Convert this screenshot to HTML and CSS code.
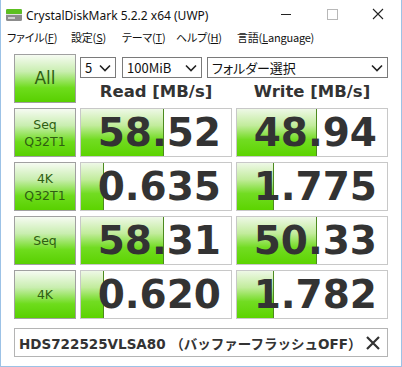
FILE: index.html
```html
<!DOCTYPE html>
<html lang="ja">
<head>
    <meta charset="UTF-8">
    <title>CrystalDiskMark 5.2.2 x64 (UWP)</title>
    <link rel="stylesheet" href="styles.css">
</head>
<body>
  <div class="window">
    <div class="titlebar">
      <svg class="app-icon" width="18" height="16" viewBox="0 0 18 16">
        <rect x="1" y="2" width="16" height="12" rx="1.5" fill="#8c8c8c"/>
        <rect x="1" y="2" width="16" height="5" rx="1.5" fill="#5cc020"/>
        <rect x="1" y="7" width="16" height="1" fill="#e0e0e0"/>
        <rect x="3" y="10" width="7" height="2" fill="#d0d0d0"/>
      </svg>
      <span class="title">CrystalDiskMark 5.2.2 x64 (UWP)</span>
      <div class="win-btns">
        <svg width="46" height="30" viewBox="0 0 46 30"><line x1="18" y1="14.5" x2="28" y2="14.5" stroke="#222" stroke-width="1"/></svg>
        <svg width="46" height="30" viewBox="0 0 46 30"><rect x="18.5" y="9.5" width="10" height="10" fill="none" stroke="#b8b8b8" stroke-width="1"/></svg>
        <svg width="46" height="30" viewBox="0 0 46 30"><path d="M18 9 L28 19 M28 9 L18 19" stroke="#222" stroke-width="1.1"/></svg>
      </div>
    </div>
    <div class="menubar">
      <span class="m-file">ファイル(<u>F</u>)</span>
      <span class="m-set">設定(<u>S</u>)</span>
      <span class="m-theme">テーマ(<u>T</u>)</span>
      <span class="m-help">ヘルプ(<u>H</u>)</span>
      <span class="m-lang">言語(<u>L</u>anguage)</span>
    </div>

    <div class="board">
      <div class="label all">All</div>
      <div class="top">
        <div class="selects">
          <div class="sel sel-count">5<svg viewBox="0 0 12 8"><path d="M1 1.5 L6 6.5 L11 1.5" fill="none" stroke="#222" stroke-width="1.6"/></svg></div>
          <div class="sel sel-size">100MiB<svg viewBox="0 0 12 8"><path d="M1 1.5 L6 6.5 L11 1.5" fill="none" stroke="#222" stroke-width="1.6"/></svg></div>
          <div class="sel sel-drive">フォルダー選択<svg viewBox="0 0 12 8"><path d="M1 1.5 L6 6.5 L11 1.5" fill="none" stroke="#222" stroke-width="1.6"/></svg></div>
        </div>
        <div class="heads">
          <div class="head">Read [MB/s]</div>
          <div class="head">Write [MB/s]</div>
        </div>
      </div>

      <div class="label">Seq<br>Q32T1</div>
      <div class="cell"><div class="bar" style="width:55%"></div><span>58.52</span></div>
      <div class="cell"><div class="bar" style="width:53.5%"></div><span>48.94</span></div>

      <div class="label">4K<br>Q32T1</div>
      <div class="cell"><div class="bar" style="width:15.5%"></div><span>0.635</span></div>
      <div class="cell"><div class="bar" style="width:24.5%"></div><span>1.775</span></div>

      <div class="label">Seq</div>
      <div class="cell"><div class="bar" style="width:55%"></div><span>58.31</span></div>
      <div class="cell"><div class="bar" style="width:53.5%"></div><span>50.33</span></div>

      <div class="label">4K</div>
      <div class="cell"><div class="bar" style="width:15.5%"></div><span>0.620</span></div>
      <div class="cell"><div class="bar" style="width:24.5%"></div><span>1.782</span></div>
    </div>

    <div class="comment">
      <span>HDS722525VLSA80 （バッファーフラッシュOFF）</span>
      <svg width="16" height="16" viewBox="0 0 16 16"><path d="M2 2 L14 14 M14 2 L2 14" stroke="#333" stroke-width="2.2"/></svg>
    </div>
  </div>
</body>
</html>
```
FILE: styles.css
```css
*{
    margin: 0;
    padding: 0;
    box-sizing: border-box;
}
body{
    background-color: #fff;
    font-family: "Noto Sans", "Noto Sans CJK JP", sans-serif;
}
.window{
    width: 402px;
    height: 367px;
    border: 1px solid #9cc2e6;
    border-top: none;
    background-color: #fff;
}
.titlebar{
    height: 30px;
    display: flex;
    align-items: center;
}
.app-icon{
    margin-left: 4px;
    margin-right: 3px;
}
.title{
    font-size: 12px;
    color: #111;
    font-family: "Noto Sans", sans-serif;
}
.win-btns{
    margin-left: auto;
    display: flex;
}
.menubar{
    height: 18px;
    display: flex;
    padding-left: 6px;
    font-size: 11px;
    letter-spacing: -0.2px;
    color: #111;
    font-family: "Noto Sans CJK JP", sans-serif;
    font-feature-settings: "palt";
    line-height: 14px;
    white-space: nowrap;
}
.menubar span{
    display: block;
}
.m-file{ width: 64px; }
.m-set{ width: 51px; }
.m-theme{ width: 54px; }
.m-help{ width: 61px; }
.menubar u{
    text-underline-offset: 1px;
}
.board{
    display: grid;
    grid-template-columns: 62px 152px 152px;
    grid-template-rows: repeat(5, 49px);
    column-gap: 4px;
    row-gap: 5px;
    padding: 6px 0 0 13px;
}
.label{
    border: 1px solid #a0a0a0;
    background: linear-gradient(#f6fbf2 0%, #c9eeb0 35%, #6edc1c 70%, #58d000 100%);
    color: #2f5e12;
    font-size: 12.5px;
    line-height: 17px;
    display: flex;
    align-items: center;
    justify-content: center;
    text-align: center;
    font-family: "DejaVu Sans", sans-serif;
}
.label.all{
    font-size: 17px;
}
.top{
    grid-column: 2 / 4;
    display: flex;
    flex-direction: column;
}
.selects{
    display: flex;
    margin-top: 3px;
    height: 21px;
}
.sel{
    border: 1px solid #7a7a7a;
    background-color: #fff;
    font-size: 13px;
    color: #111;
    display: flex;
    align-items: center;
    justify-content: space-between;
    padding: 0 4px 0 4px;
    font-family: "Noto Sans CJK JP", sans-serif;
    font-feature-settings: "palt";
}
.sel svg{
    width: 12px;
    height: 8px;
}
.sel-count{
    width: 36px;
}
.sel-size{
    width: 80px;
    margin-left: 6px;
}
.sel-drive{
    width: 181px;
    margin-left: 5px;
}
.heads{
    flex: 1;
    display: flex;
    column-gap: 4px;
    align-items: center;
}
.head{
    width: 152px;
    text-align: center;
    font-family: "DejaVu Sans", sans-serif;
    font-weight: bold;
    font-size: 16.5px;
    color: #333;
    padding-top: 2px;
}
.cell{
    position: relative;
    border: 1px solid #c8c8c8;
    background-color: #fff;
    display: flex;
    align-items: center;
    justify-content: flex-end;
    padding-right: 10px;
    overflow: hidden;
}
.bar{
    position: absolute;
    left: 0;
    top: 0;
    bottom: 0;
    background: linear-gradient(#eef8e6 0%, #c2ec9c 35%, #72dc22 65%, #5cd400 100%);
    border-right: 1px solid #4c8a1e;
}
.cell span{
    position: relative;
    font-family: "DejaVu Sans", sans-serif;
    font-weight: bold;
    font-size: 39px;
    color: #333;
    line-height: 1;
}
.comment{
    margin: 9px 0 0 13px;
    width: 374px;
    height: 29px;
    border: 1px solid #b4b4b4;
    display: flex;
    align-items: center;
    justify-content: space-between;
    padding: 0 6px 0 4px;
    font-family: "DejaVu Sans", "Noto Sans CJK JP", sans-serif;
    font-weight: bold;
    font-size: 13.5px;
    color: #333;
}
```
